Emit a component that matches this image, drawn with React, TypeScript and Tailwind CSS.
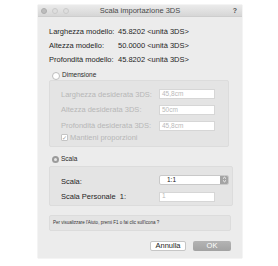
import React from "react";

const font = { fontFamily: '"Liberation Sans", Arial, sans-serif' };

function Field({ value }: { value: string }) {
  return (
    <div className="w-[56px] h-[10px] bg-white border border-[#d6d6d6] flex items-center pl-[2px] text-[6.5px] text-[#b9b9b9] leading-none">
      {value}
    </div>
  );
}

export default function App() {
  return (
    <div className="w-[278px] h-[266px] bg-white pt-[5px] pl-[38px]" style={font}>
      <div className="w-[204px] h-[253px] bg-[#ececec] flex flex-col shadow-[0_0_1px_rgba(0,0,0,0.25)]">
        {/* title bar */}
        <div className="relative h-[12px] bg-gradient-to-b from-[#ebebeb] to-[#d6d6d6] border-b border-[#cdcdcd] flex items-center justify-center">
          <div className="absolute left-[3px] top-[2.5px] flex gap-[5px]">
            <span className="w-[6px] h-[6px] rounded-full bg-[#bdbdbd] border border-[#adadad]" />
            <span className="w-[6px] h-[6px] rounded-full bg-[#dedede] border border-[#cacaca]" />
            <span className="w-[6px] h-[6px] rounded-full bg-[#dedede] border border-[#cacaca]" />
          </div>
          <span className="text-[7.5px] text-[#4a4a4a] leading-none">Scala importazione 3DS</span>
          <span className="absolute right-[5px] top-[2px] text-[7px] font-bold text-[#555] leading-none">?</span>
        </div>

        {/* model info */}
        <div className="pl-[11px] pt-[8px] text-[7.5px] text-[#1f1f1f] leading-[14px]">
          <div className="flex"><span className="w-[69px]">Larghezza modello:</span><span>45.8202 &lt;unità 3DS&gt;</span></div>
          <div className="flex"><span className="w-[69px]">Altezza modello:</span><span>50.0000 &lt;unità 3DS&gt;</span></div>
          <div className="flex"><span className="w-[69px]">Profondità modello:</span><span>45.8202 &lt;unità 3DS&gt;</span></div>
        </div>

        {/* Dimensione */}
        <div className="flex items-center pl-[14px] mt-[4px] h-[9px]">
          <span className="w-[8px] h-[8px] rounded-full bg-white border border-[#bdbdbd]" />
          <span className="ml-[2px] text-[6.5px] text-[#2a2a2a] leading-none">Dimensione</span>
        </div>
        <div className="ml-[11px] w-[180px] h-[67px] bg-[#e4e4e4] border border-[#dcdcdc] rounded-[2px] pl-[11px] pt-[8px] text-[7.5px] text-[#b7b7b7]">
          <div className="grid grid-cols-[98px_56px] gap-y-[6px] items-center leading-none">
            <span className="pt-[2px]">Larghezza desiderata 3DS:</span>
            <Field value="45,8cm" />
            <span>Altezza desiderata 3DS:</span>
            <Field value="50cm" />
            <span>Profondità desiderata 3DS:</span>
            <Field value="45,8cm" />
          </div>
          <div className="flex items-center mt-[3px] leading-none">
            <span className="w-[7px] h-[7px] bg-white border border-[#c4c4c4] rounded-[1px] flex items-center justify-center text-[6px] text-[#9a9a9a]">✓</span>
            <span className="ml-[2px]">Mantieni proporzioni</span>
          </div>
        </div>

        {/* Scala */}
        <div className="flex items-center pl-[14px] mt-[8px] h-[8px]">
          <span className="w-[7px] h-[7px] rounded-full bg-[#9b9b9b] flex items-center justify-center">
            <span className="w-[3px] h-[3px] rounded-full bg-[#e6e6e6]" />
          </span>
          <span className="ml-[2px] text-[6.5px] text-[#2a2a2a] leading-none">Scala</span>
        </div>
        <div className="ml-[11px] w-[184px] h-[40px] mt-[3px] bg-[#e4e4e4] border border-[#dcdcdc] rounded-[2px] pl-[11px] pt-[7px] text-[7.5px] text-[#1f1f1f]">
          <div className="grid grid-cols-[98px_auto] gap-y-[6px] items-center leading-none">
            <span className="pt-[4px]">Scala:</span>
            <div className="w-[70px] h-[10px] bg-white border border-[#c9c9c9] rounded-[2px] flex items-center overflow-hidden">
              <span className="flex-1 pl-[7px] text-[6.5px] text-[#222]">1:1</span>
              <span className="w-[8px] h-full bg-[#a4a4a4] flex flex-col items-center justify-center text-white">
                <svg width="5" height="7" viewBox="0 0 5 7" fill="none" stroke="white" strokeWidth="0.9">
                  <path d="M1 2.6 L2.5 1.2 L4 2.6" />
                  <path d="M1 4.4 L2.5 5.8 L4 4.4" />
                </svg>
              </span>
            </div>
            <span>Scala Personale&nbsp;&nbsp;1:</span>
            <Field value="1" />
          </div>
        </div>

        {/* help */}
        <div className="ml-[11px] w-[182px] h-[16px] mt-[9px] bg-[#e4e4e4] border border-[#dcdcdc] rounded-[2px] pl-[3px] flex items-center text-[4.5px] text-[#333] leading-none">
          Per visualizzare l'Aiuto, premi F1 o fai clic sull'icona ?
        </div>

        {/* buttons */}
        <div className="flex justify-end gap-[7px] pr-[11px] mt-[10px]">
          <button className="w-[36px] h-[10px] bg-white border border-[#c6c6c6] rounded-[2px] text-[7.5px] text-[#222] leading-none flex items-center justify-center">
            Annulla
          </button>
          <button className="w-[38px] h-[10px] bg-gradient-to-b from-[#b4b4b4] to-[#a2a2a2] rounded-[2px] text-[7.5px] text-white leading-none flex items-center justify-center">
            OK
          </button>
        </div>
      </div>
    </div>
  );
}
